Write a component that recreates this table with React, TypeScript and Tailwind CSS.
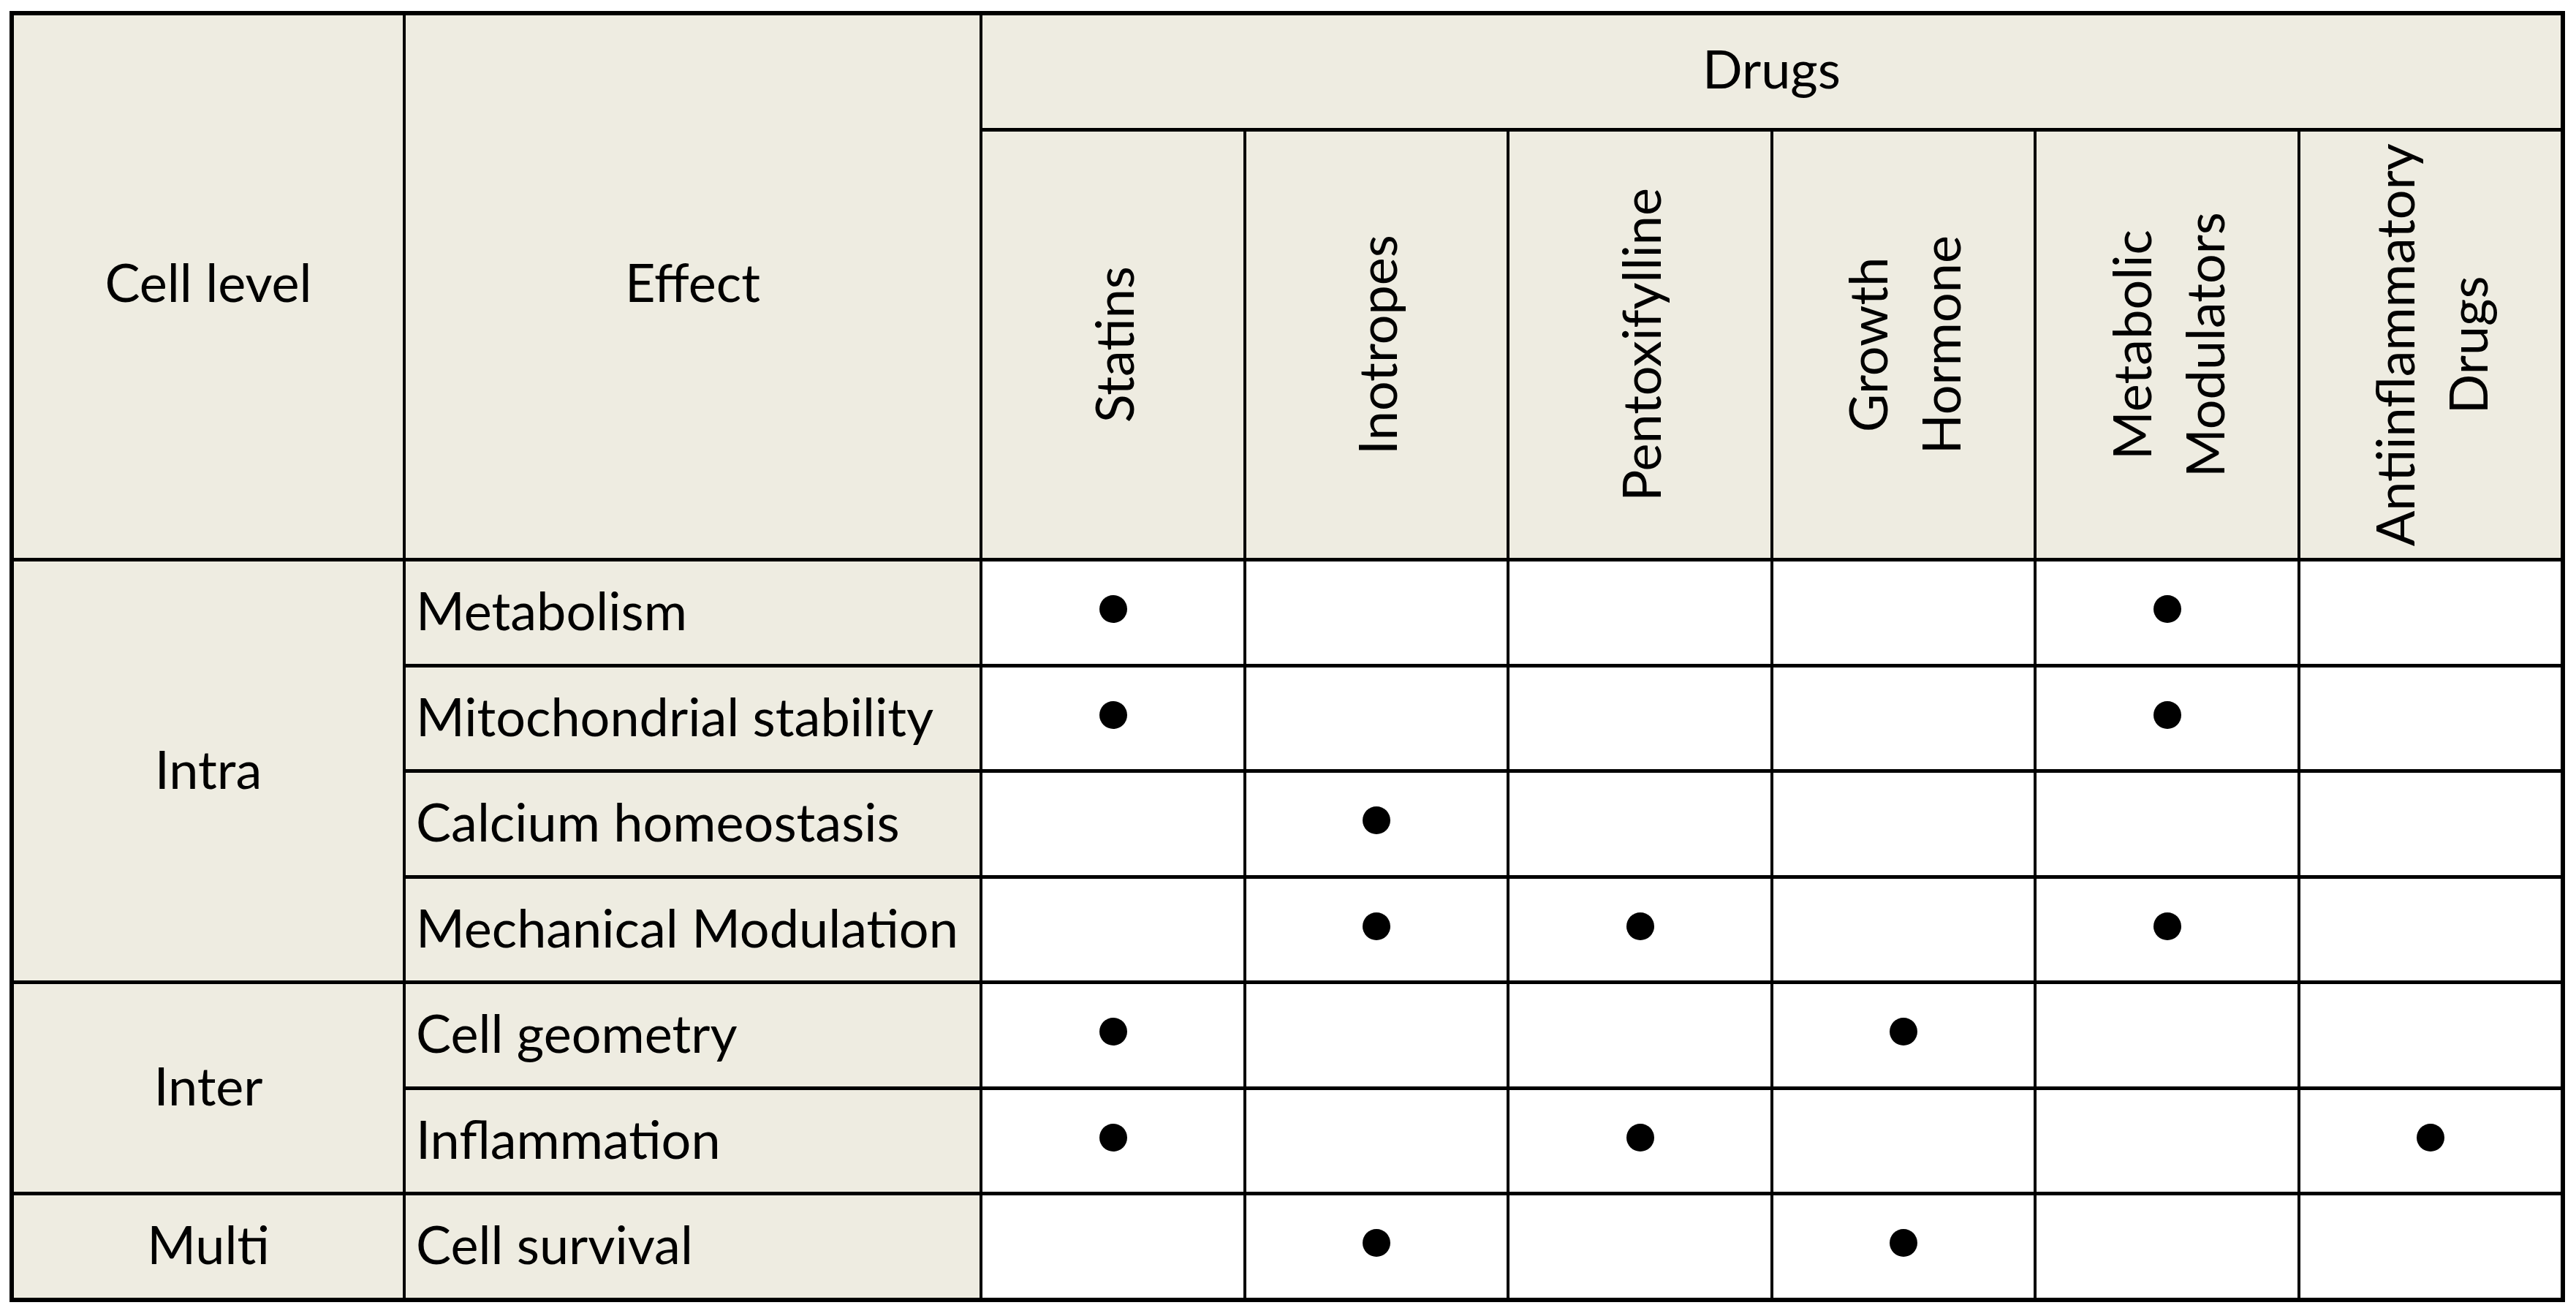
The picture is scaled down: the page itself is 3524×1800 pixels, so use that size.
import React from "react";

const drugs: string[][] = [
  ["Statins"],
  ["Inotropes"],
  ["Pentoxifylline"],
  ["Growth", "Hormone"],
  ["Metabolic", "Modulators"],
  ["Antiinflammatory", "Drugs"],
];

type Row = { effect: string; dots: number[] };
type Group = { level: string; span: string; rows: Row[] };

const groups: Group[] = [
  {
    level: "Intra",
    span: "row-span-4",
    rows: [
      { effect: "Metabolism", dots: [0, 4] },
      { effect: "Mitochondrial stability", dots: [0, 4] },
      { effect: "Calcium homeostasis", dots: [1] },
      { effect: "Mechanical Modulation", dots: [1, 2, 4] },
    ],
  },
  {
    level: "Inter",
    span: "row-span-2",
    rows: [
      { effect: "Cell geometry", dots: [0, 3] },
      { effect: "Inflammation", dots: [0, 2, 5] },
    ],
  },
  {
    level: "Multi",
    span: "row-span-1",
    rows: [{ effect: "Cell survival", dots: [1, 3] }],
  },
];

const font = "font-['Lato','Liberation_Sans',sans-serif]";

export default function App() {
  return (
    <div className={`min-h-screen bg-white pl-[13px] pt-[15px] text-black ${font}`}>
      <div className="inline-grid grid-cols-[532px_785px_357px_356px_357px_356px_357px_356px] grid-rows-[154px_583px_140px_139px_140px_139px_140px_139px_140px] gap-x-[4px] gap-y-[5px] bg-black p-[6px] text-[72px] leading-none">
        <div className="row-span-2 flex items-center justify-center bg-[#EEECE1] pb-[14px]">Cell level</div>
        <div className="row-span-2 flex items-center justify-center bg-[#EEECE1] pb-[14px]">Effect</div>
        <div className="col-span-6 flex items-center justify-center bg-[#EEECE1] pb-[10px]">Drugs</div>
        {drugs.map((lines, i) => (
          <div key={i} className="flex items-center justify-center bg-[#EEECE1]">
            <span className="rotate-180 text-center leading-[100px] [writing-mode:vertical-rl]">
              {lines.map((l, j) => (
                <React.Fragment key={j}>
                  {j > 0 && <br />}
                  {l}
                </React.Fragment>
              ))}
            </span>
          </div>
        ))}
        {groups.map((g) => (
          <React.Fragment key={g.level}>
            <div className={`${g.span} flex items-center justify-center bg-[#EEECE1] pb-[8px]`}>{g.level}</div>
            {g.rows.map((r) => (
              <React.Fragment key={r.effect}>
                <div className="flex items-center bg-[#EEECE1] pl-[14px] pb-[8px] whitespace-nowrap">{r.effect}</div>
                {drugs.map((_, i) => (
                  <div key={i} className="flex items-center justify-center bg-white">
                    {r.dots.includes(i) && <div className="mb-[10px] h-[38px] w-[38px] rounded-full bg-black" />}
                  </div>
                ))}
              </React.Fragment>
            ))}
          </React.Fragment>
        ))}
      </div>
    </div>
  );
}
